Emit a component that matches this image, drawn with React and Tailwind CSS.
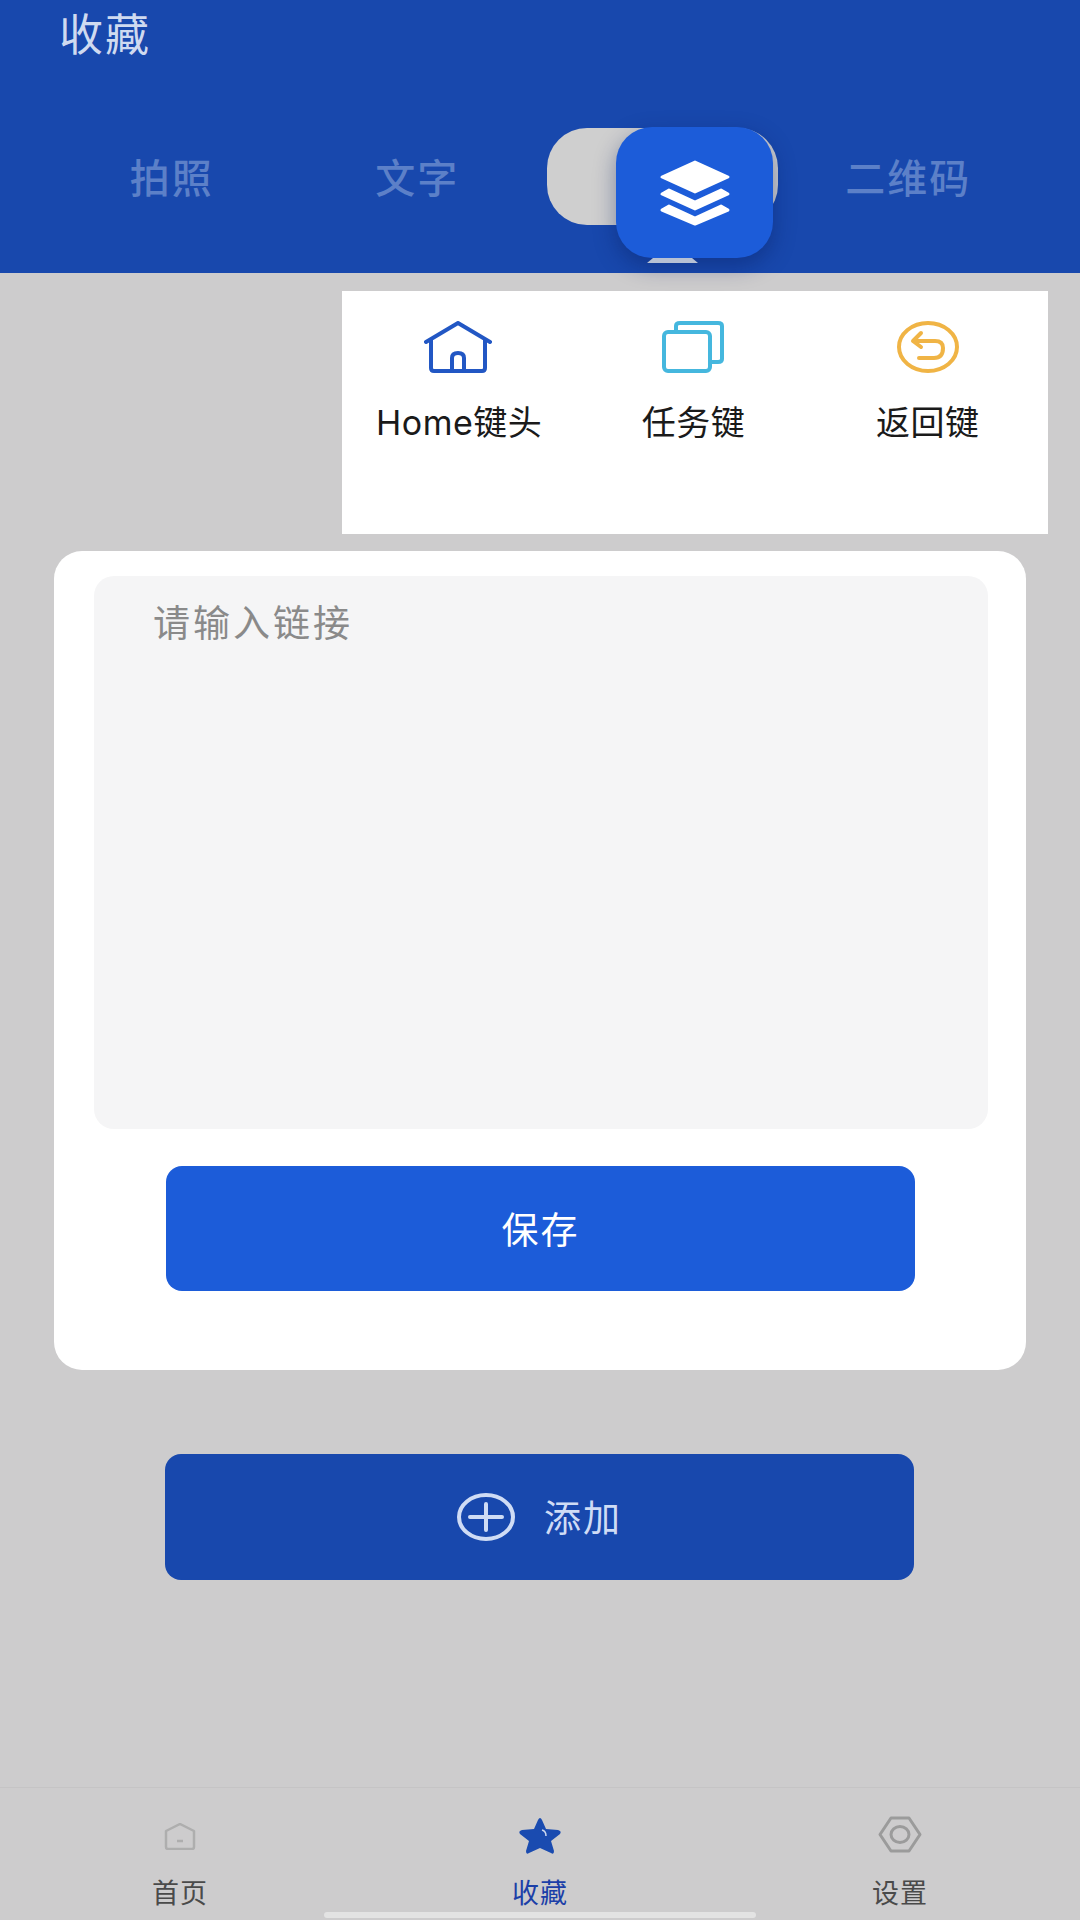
const cjk = "font-['Noto_Sans_CJK_SC','Noto_Sans',sans-serif]";

const HomeIcon = () => (
  <svg className="-ml-[3px]" width="68" height="52" viewBox="0 0 68 52" fill="none" stroke="#2257c4" strokeWidth="4" strokeLinejoin="round" strokeLinecap="round">
    <path d="M2 21 L34 2 L66 21" />
    <path d="M7 19 V47 Q7 50 10 50 H58 Q61 50 61 47 V19" />
    <path d="M28 50 V37 Q28 32 34 32 Q40 32 40 37 V50" />
  </svg>
);

const TaskIcon = () => (
  <svg width="62" height="52" viewBox="0 0 62 52" fill="none" stroke="#45b7de" strokeWidth="4" strokeLinejoin="round">
    <rect x="2" y="11" width="46" height="39" rx="4" />
    <path d="M14 10 V5 Q14 2 18 2 H56 Q60 2 60 5 V38 Q60 41 56 41 H49" />
  </svg>
);

const BackIcon = () => (
  <svg width="62" height="52" viewBox="0 0 62 52" fill="none" stroke="#f0b445" strokeWidth="4" strokeLinecap="round" strokeLinejoin="round">
    <ellipse cx="31" cy="26" rx="29" ry="24" />
    <path d="M24 12 L16 20 L24 26" />
    <path d="M17 20 H38 Q46 20 46 27 Q46 37 37 37 H22" />
  </svg>
);

const LayersIcon = () => (
  <svg width="72" height="68" viewBox="0 0 72 68" fill="#fff" stroke="#fff" strokeWidth="3" strokeLinejoin="round">
    <path d="M36 3 L69 18 L36 33 L3 18 Z" />
    <path d="M10 31 L36 43 L62 31 L69 35 L36 50 L3 35 Z" />
    <path d="M10 47 L36 59 L62 47 L69 51 L36 65 L3 51 Z" />
  </svg>
);

const PlusIcon = () => (
  <svg width="58" height="48" viewBox="0 0 58 48" fill="none" stroke="#cfdcf5" strokeWidth="4" strokeLinecap="round">
    <ellipse cx="29" cy="24" rx="27" ry="22" />
    <path d="M13 24 H45 M29 11 V37" />
  </svg>
);

const NavHome = () => (
  <svg width="32" height="27" viewBox="0 0 32 27" fill="none" stroke="#aeaeae" strokeWidth="2.5" strokeLinejoin="round">
    <path d="M2 8 L16 1 L30 8 V24 Q30 26 28 26 H4 Q2 26 2 24 Z" />
    <path d="M13 18 H19" />
  </svg>
);

const NavStar = () => (
  <svg width="44" height="38" viewBox="0 0 44 38" fill="#1a4bb0">
    <path d="M22 1 Q23 1 24 3 L28 12 L40 13 Q44 14 42 17 L33 24 L36 34 Q36 38 33 36 L22 31 L11 36 Q8 38 8 34 L11 24 L2 17 Q0 14 4 13 L16 12 L20 3 Q21 1 22 1 Z" />
    <path d="M24 13 Q28 14 28 19" fill="none" stroke="#cdd8ee" strokeWidth="1.5" />
  </svg>
);

const NavSettings = () => (
  <svg className="-mt-[3px]" width="44" height="37" viewBox="0 0 44 37" fill="none" stroke="#9b9b9b" strokeWidth="3" strokeLinejoin="round">
    <path d="M13 2 H31 L42 18.5 L31 35 H13 L2 18.5 Z" />
    <ellipse cx="22" cy="18.5" rx="9" ry="8" />
  </svg>
);

const keys = [
  { label: "Home键头", icon: <HomeIcon /> },
  { label: "任务键", icon: <TaskIcon /> },
  { label: "返回键", icon: <BackIcon /> },
];

const navItems = [
  { label: "首页", icon: <NavHome />, color: "text-[#4a4a4a]" },
  { label: "收藏", icon: <NavStar />, color: "text-[#1c3fa8]" },
  { label: "设置", icon: <NavSettings />, color: "text-[#4a4a4a]" },
];

const App = () => {
  return (
    <div className={`relative flex flex-col h-[1920px] w-[1080px] overflow-hidden bg-[#cdcccd] ${cjk}`}>
      <header className="h-[273px] shrink-0 bg-[#1848ad] flex flex-col">
        <h1 className="pl-[59px] pt-[8px] h-[128px] text-[44px] leading-[48px] font-normal tracking-[2px] text-[#cfdaf0]">
          收藏
        </h1>
        <div className="grid grid-cols-4 px-[49px] text-[40px] leading-[48px] tracking-[2px] font-medium text-[#5c80c8] text-center">
          <div className="pt-[24px]">拍照</div>
          <div className="pt-[24px]">文字</div>
          <div className="relative justify-self-center w-[231px] h-[97px] rounded-[40px] bg-[#cfcfcf]">
            <div className="absolute left-[69px] -top-[1px] w-[157px] h-[131px] rounded-[36px] bg-[#1c5cd9] shadow-[0_8px_22px_rgba(8,28,90,0.4)] flex items-center justify-center">
              <LayersIcon />
            </div>
            <svg className="absolute left-[100px] top-[130px]" width="51" height="5" viewBox="0 0 51 5">
              <path d="M6 0 H45 L51 5 H0 Z" fill="#b7c1d4" />
            </svg>
          </div>
          <div className="pt-[24px]">二维码</div>
        </div>
      </header>

      <main className="flex-1 flex flex-col">
        <section className="mt-[18px] ml-[342px] w-[706px] h-[243px] bg-white grid grid-cols-3 pt-[30px] pr-[3px]">
          {keys.map((key) => (
            <div key={key.label} className="flex flex-col items-center">
              <div className="h-[52px] flex items-center justify-center">{key.icon}</div>
              <span className="mt-[28px] font-['Inter','Noto_Sans_CJK_SC',sans-serif] text-[34px] leading-[44px] tracking-[0.5px] text-[#1a1a1a] whitespace-nowrap">
                {key.label}
              </span>
            </div>
          ))}
        </section>

        <section className="mt-[17px] ml-[54px] mr-[54px] h-[819px] rounded-[28px] bg-white pl-[40px] pr-[38px] pt-[25px]">
          <div className="h-[553px] rounded-[20px] bg-[#f5f5f6] pl-[59px] pt-[21px] text-[37px] leading-[48px] tracking-[3px] text-[#8a8a8a]">
            请输入链接
          </div>
          <button className="mt-[37px] ml-[72px] w-[749px] h-[125px] rounded-[16px] bg-[#1c5cd9] text-white text-[37px] tracking-[2px] flex items-center justify-center">
            保存
          </button>
        </section>

        <button className="mt-[84px] ml-[165px] w-[749px] h-[126px] rounded-[16px] bg-[#1848ad] text-[#cfdcf5] text-[37px] tracking-[2px] flex items-center justify-center gap-[29px]">
          <PlusIcon />
          <span>添加</span>
        </button>
      </main>

      <nav className="h-[133px] shrink-0 border-t border-[#c5c4c5] grid grid-cols-3">
        {navItems.map((item) => (
          <div key={item.label} className="flex flex-col items-center">
            <div className="h-[38px] mt-[29px] flex items-center justify-center">{item.icon}</div>
            <span className={`mt-[18px] text-[27px] leading-[38px] tracking-[1px] ${item.color}`}>{item.label}</span>
          </div>
        ))}
      </nav>
      <div className="absolute left-[324px] bottom-[2px] w-[432px] h-[6px] rounded-full bg-[#e3e3e3]"></div>
    </div>
  );
};

export default App;
